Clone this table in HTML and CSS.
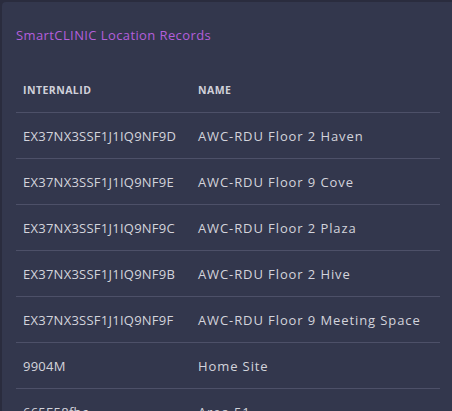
FILE: index.html
```html
<!DOCTYPE html>
<html>
<head>
<meta charset="utf-8">
<link rel="stylesheet" href="styles.css">
</head>
<body>
<div class="card">
  <div class="title">SmartCLINIC Location Records</div>
  <table class="records">
    <thead>
      <tr><th class="col-id">INTERNALID</th><th>NAME</th></tr>
    </thead>
    <tbody>
      <tr><td class="id">EX37NX3SSF1J1IQ9NF9D</td><td class="name">AWC-RDU Floor 2 Haven</td></tr>
      <tr><td class="id">EX37NX3SSF1J1IQ9NF9E</td><td class="name">AWC-RDU Floor 9 Cove</td></tr>
      <tr><td class="id">EX37NX3SSF1J1IQ9NF9C</td><td class="name">AWC-RDU Floor 2 Plaza</td></tr>
      <tr><td class="id">EX37NX3SSF1J1IQ9NF9B</td><td class="name">AWC-RDU Floor 2 Hive</td></tr>
      <tr><td class="id">EX37NX3SSF1J1IQ9NF9F</td><td class="name">AWC-RDU Floor 9 Meeting Space</td></tr>
      <tr><td class="id">9904M</td><td class="name">Home Site</td></tr>
      <tr><td class="id">665E58fbc</td><td class="name">Area 51</td></tr>
    </tbody>
  </table>
</div>
</body>
</html>
```
FILE: styles.css
```css
html, body {
  margin: 0;
  padding: 0;
  background: #2a2c3e;
  overflow: hidden;
}
body {
  padding: 2px 0 0 2px;
  font-family: "Open Sans", "Liberation Sans", sans-serif;
}
.card {
  background: #33374d;
  border-radius: 4px 0 0 0;
  padding: 25px 12px 0 14px;
  min-height: 500px;
}
.title {
  color: #b35fdc;
  font-size: 13px;
  letter-spacing: 0.4px;
  line-height: 16px;
  margin-bottom: 24px;
}
.records {
  width: 424px;
  border-collapse: collapse;
}
.records th {
  text-align: left;
  color: #d0d1da;
  font-size: 10.5px;
  letter-spacing: 0.45px;
  font-weight: 700;
  height: 45px;
  padding: 0 7px;
  border-bottom: 1px solid #4d5068;
}
.records .col-id {
  width: 161px;
}
.records td {
  color: #d3d4dc;
  font-size: 13px;
  height: 45px;
  padding: 0 7px;
  border-bottom: 1px solid #4d5068;
  white-space: nowrap;
}
.records td.id {
  letter-spacing: 0.25px;
}
.records td.name {
  letter-spacing: 0.9px;
}
```
